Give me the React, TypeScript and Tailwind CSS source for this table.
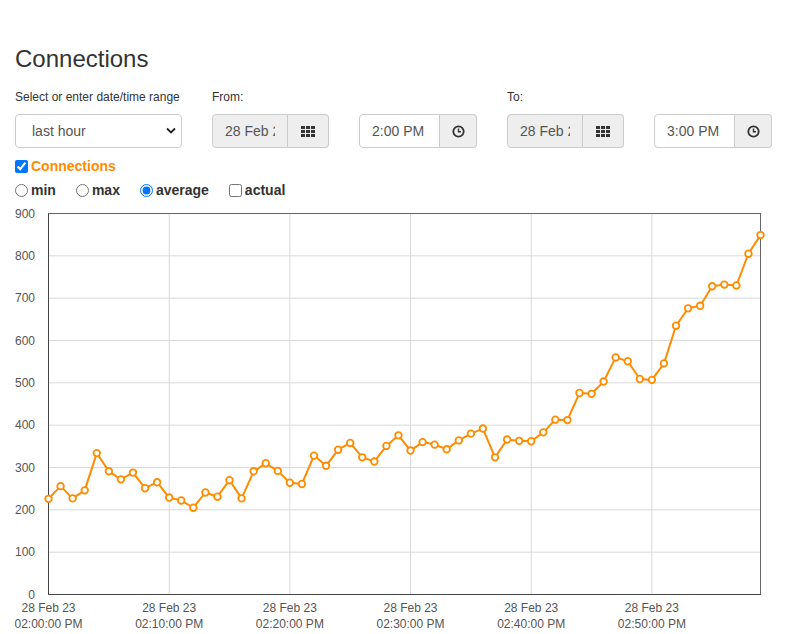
import React from "react";

const font = { fontFamily: '"Liberation Sans", Arial, Helvetica, sans-serif' };

const values = [
  226, 256, 227, 246, 334, 291, 272, 288, 251, 265, 229, 222, 205, 241, 231, 270, 227, 291, 310, 292,
  264, 261, 328, 304, 342, 358, 324, 314, 351, 376, 340, 360, 354, 343, 364, 380, 392, 324, 366, 363,
  362, 383, 413, 412, 476, 474, 503, 560, 551, 509, 507, 546, 635, 676, 682, 728, 732, 730, 805, 849,
];

// plot frame in svg coords (svg starts at page y=200)
const L = 48.5;
const R = 760.5;
const T = 13.5;
const B = 394.5;
const ORANGE = "#ff8c00";

function GridIcon() {
  return (
    <svg width="14" height="11" viewBox="0 0 14 11" fill="#333">
      {[0, 1, 2].map((r) =>
        [0, 1, 2].map((c) => <rect key={`${r}-${c}`} x={c * 5} y={r * 4} width="4" height="3" />)
      )}
    </svg>
  );
}

function ClockIcon() {
  return (
    <svg width="13" height="13" viewBox="0 0 13 13" fill="none" stroke="#333">
      <circle cx="6.5" cy="6.5" r="5.2" strokeWidth="1.8" />
      <path d="M6.5 3.5V6.8H9" strokeWidth="1.4" />
    </svg>
  );
}

function DateGroup({ value, time }: { value: string; time?: boolean }) {
  return (
    <div className="flex h-[34px]">
      <input
        readOnly
        value={value}
        className={`h-[34px] ${time ? "w-[81px] bg-white" : "w-[76px] bg-[#eeeeee]"} rounded-l-[4px] border border-[#cccccc] px-3 text-[14px] text-[#555555] outline-none`}
        style={font}
      />
      <span
        className={`flex h-[34px] ${time ? "w-[37px]" : "w-[41px]"} items-center justify-center rounded-r-[4px] border border-l-0 border-[#cccccc] bg-[#eeeeee]`}
      >
        {time ? <ClockIcon /> : <GridIcon />}
      </span>
    </div>
  );
}

function Chart() {
  const n = values.length;
  const xs = (i: number) => L + ((R - L) * i) / (n - 1);
  const ys = (v: number) => B - ((B - T) * v) / 900;
  const pts = values.map((v, i) => `${xs(i).toFixed(1)},${ys(v).toFixed(1)}`).join(" ");
  const yTicks = [0, 100, 200, 300, 400, 500, 600, 700, 800, 900];
  const xTicks = [0, 1, 2, 3, 4, 5];
  const step = ((R - L) * 10) / (n - 1);

  return (
    <svg width="787" height="434" className="block" style={font}>
      {yTicks.map((t) => (
        <line key={t} x1={L} x2={R} y1={ys(t)} y2={ys(t)} stroke="#d9d9d9" />
      ))}
      {xTicks.map((k) => (
        <line key={k} x1={L + step * k} x2={L + step * k} y1={T} y2={B} stroke="#d9d9d9" />
      ))}
      <rect x={L} y={T} width={R - L} height={B - T} fill="none" stroke="#666" />
      <line x1={L} x2={L} y1={T} y2={B} stroke="#444" />
      <line x1={L} x2={R} y1={B} y2={B} stroke="#444" />
      {yTicks.map((t) => (
        <text key={t} x="35" y={ys(t) + 4} textAnchor="end" fontSize="12" fill="#555">
          {t}
        </text>
      ))}
      {xTicks.map((k) => (
        <g key={k} fontSize="12" fill="#555" textAnchor="middle">
          <text x={L + step * k} y="411.5">
            28 Feb 23
          </text>
          <text x={L + step * k} y="428">
            {`02:${k}0:00 PM`}
          </text>
        </g>
      ))}
      <polyline points={pts} fill="none" stroke={ORANGE} strokeWidth="2" strokeLinejoin="round" />
      {values.map((v, i) => (
        <circle key={i} cx={xs(i)} cy={ys(v)} r="3.3" fill="white" stroke={ORANGE} strokeWidth="1.8" />
      ))}
    </svg>
  );
}

export default function App() {
  return (
    <div className="h-[634px] w-[787px] overflow-hidden bg-white text-[#333333]" style={font}>
      <div className="px-[15px]">
        <h1 className="mt-[46px] text-[24px] leading-[26px] font-normal">Connections</h1>

        {/* range controls */}
        <div className="mt-[17px] flex gap-[30px]">
          <div className="flex w-[167px] flex-col">
            <label className="mb-[8px] text-[12px] leading-[17px]">Select or enter date/time range</label>
            <div className="relative">
              <select
                className="h-[34px] w-[167px] appearance-none rounded-[4px] border border-[#cccccc] bg-white pl-4 text-[14px] text-[#555555] outline-none"
                style={font}
                defaultValue="last hour"
              >
                <option>last hour</option>
                <option>last day</option>
                <option>last week</option>
              </select>
              <svg
                className="pointer-events-none absolute right-[6px] top-[13px]"
                width="10"
                height="8"
                viewBox="0 0 10 8"
                fill="none"
                stroke="#222"
                strokeWidth="1.8"
              >
                <path d="M1 1.5L5 5.5L9 1.5" />
              </svg>
            </div>
          </div>

          <div className="flex flex-col">
            <label className="mb-[8px] text-[12px] leading-[17px]">From:</label>
            <div className="flex gap-[30px]">
              <DateGroup value="28 Feb 2023" />
              <DateGroup value="2:00 PM" time />
            </div>
          </div>

          <div className="flex flex-col">
            <label className="mb-[8px] text-[12px] leading-[17px]">To:</label>
            <div className="flex gap-[30px]">
              <DateGroup value="28 Feb 2023" />
              <DateGroup value="3:00 PM" time />
            </div>
          </div>
        </div>

        {/* series toggles */}
        <label className="mt-[8px] flex h-[20px] items-center">
          <input type="checkbox" defaultChecked className="mr-[3px] h-[13px] w-[13px]" />
          <span className="text-[14px] font-bold text-[#ff8c00]">Connections</span>
        </label>
        <div className="mt-[4px] flex h-[20px] items-center text-[14px] font-bold">
          <label className="mr-[20px] flex items-center">
            <input type="radio" name="agg" className="mr-[3px] h-[13px] w-[13px]" />
            min
          </label>
          <label className="mr-[20px] flex items-center">
            <input type="radio" name="agg" className="mr-[3px] h-[13px] w-[13px]" />
            max
          </label>
          <label className="mr-[20px] flex items-center">
            <input type="radio" name="agg" defaultChecked className="mr-[3px] h-[13px] w-[13px]" />
            average
          </label>
          <label className="flex items-center">
            <input type="checkbox" className="mr-[3px] h-[13px] w-[13px]" />
            actual
          </label>
        </div>
      </div>

      <Chart />
    </div>
  );
}
